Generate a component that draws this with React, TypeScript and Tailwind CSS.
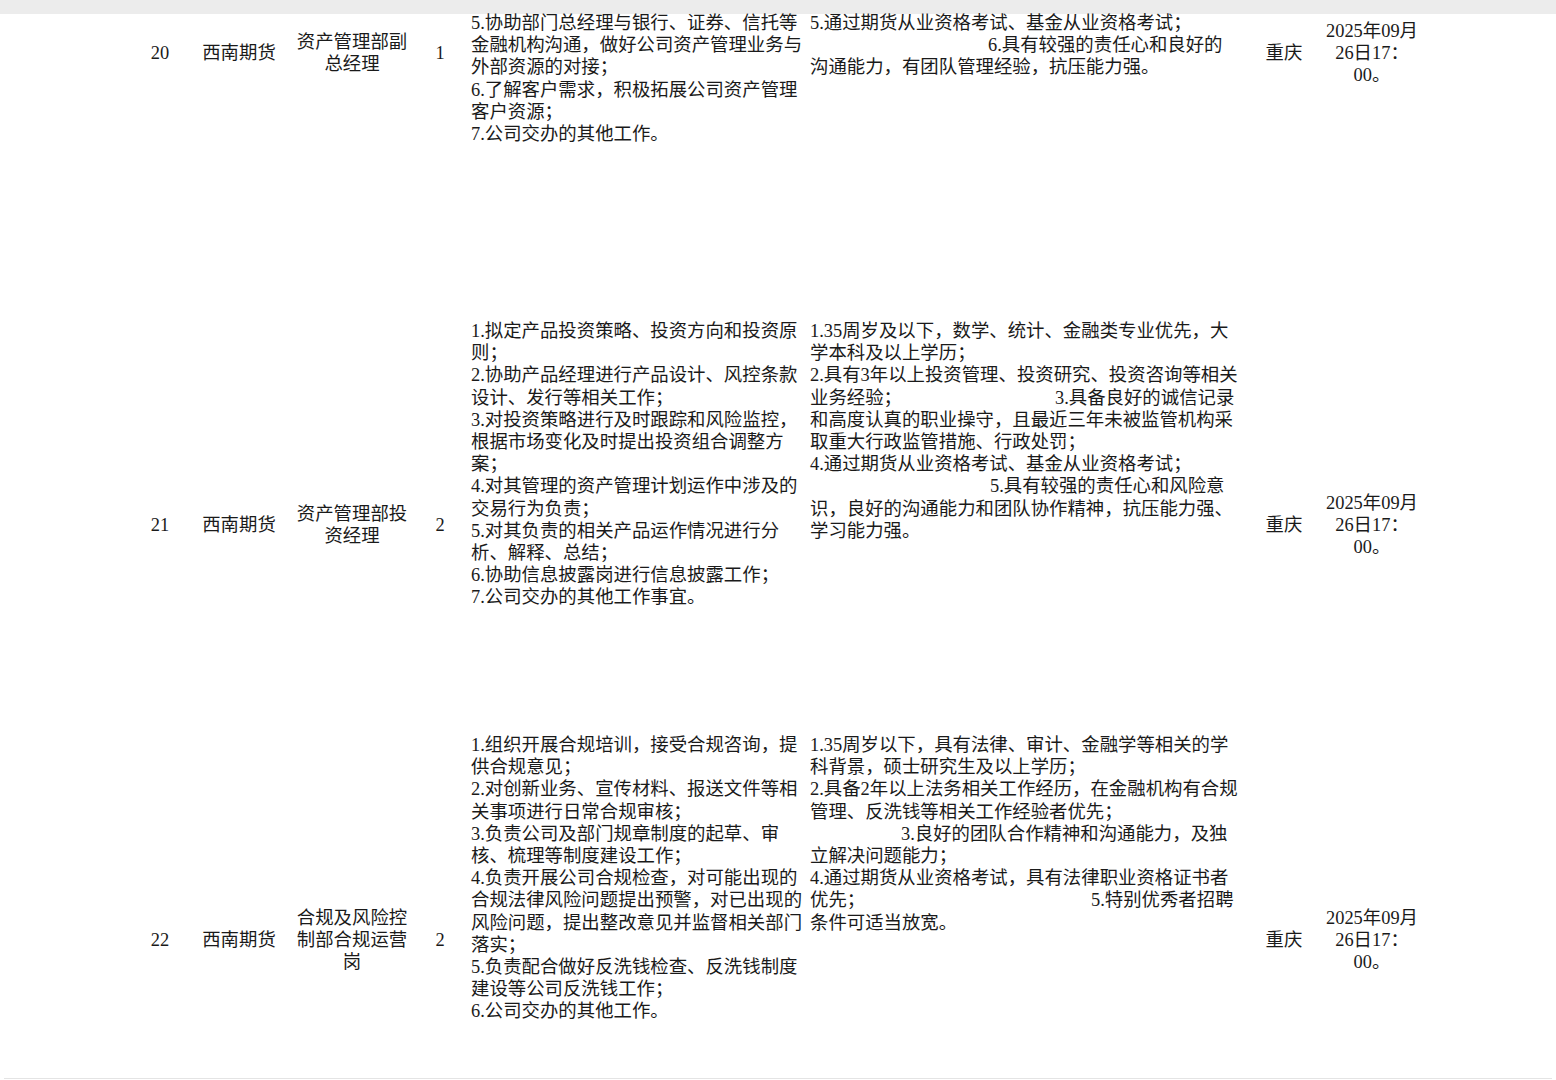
import React from 'react';

type Line = string | { t: string; cls?: string; head?: string; headCls?: string };

interface JobRow {
  no: string;
  company: string;
  title: string[];
  count: string;
  rowCls: string;
  textPad: string;
  duties: Line[];
  reqs: Line[];
  city: string;
  deadline: string[];
}

const rows: JobRow[] = [
  {
    no: '20',
    company: '西南期货',
    title: ['资产管理部副', '总经理'],
    count: '1',
    rowCls: 'h-[530px] -mt-[226px]',
    textPad: 'pt-[224px]',
    duties: [
      '5.协助部门总经理与银行、证券、信托等',
      '金融机构沟通，做好公司资产管理业务与',
      '外部资源的对接；',
      '6.了解客户需求，积极拓展公司资产管理',
      '客户资源；',
      '7.公司交办的其他工作。',
    ],
    reqs: [
      '5.通过期货从业资格考试、基金从业资格考试；',
      { t: '6.具有较强的责任心和良好的', cls: 'pl-[178px]' },
      '沟通能力，有团队管理经验，抗压能力强。',
    ],
    city: '重庆',
    deadline: ['2025年09月', '26日17：', '00。'],
  },
  {
    no: '21',
    company: '西南期货',
    title: ['资产管理部投', '资经理'],
    count: '2',
    rowCls: 'h-[414px]',
    textPad: 'pt-[2px]',
    duties: [
      '1.拟定产品投资策略、投资方向和投资原',
      '则；',
      '2.协助产品经理进行产品设计、风控条款',
      '设计、发行等相关工作；',
      '3.对投资策略进行及时跟踪和风险监控，',
      '根据市场变化及时提出投资组合调整方',
      '案；',
      '4.对其管理的资产管理计划运作中涉及的',
      '交易行为负责；',
      '5.对其负责的相关产品运作情况进行分',
      '析、解释、总结；',
      '6.协助信息披露岗进行信息披露工作；',
      '7.公司交办的其他工作事宜。',
    ],
    reqs: [
      '1.35周岁及以下，数学、统计、金融类专业优先，大',
      '学本科及以上学历；',
      '2.具有3年以上投资管理、投资研究、投资咨询等相关',
      { head: '业务经验；', headCls: 'w-[245px]', t: '3.具备良好的诚信记录' },
      '和高度认真的职业操守，且最近三年未被监管机构采',
      '取重大行政监管措施、行政处罚；',
      '4.通过期货从业资格考试、基金从业资格考试；',
      { t: '5.具有较强的责任心和风险意', cls: 'pl-[180px]' },
      '识，良好的沟通能力和团队协作精神，抗压能力强、',
      '学习能力强。',
    ],
    city: '重庆',
    deadline: ['2025年09月', '26日17：', '00。'],
  },
  {
    no: '22',
    company: '西南期货',
    title: ['合规及风险控', '制部合规运营', '岗'],
    count: '2',
    rowCls: 'h-[416px]',
    textPad: 'pt-[2px]',
    duties: [
      '1.组织开展合规培训，接受合规咨询，提',
      '供合规意见；',
      '2.对创新业务、宣传材料、报送文件等相',
      '关事项进行日常合规审核；',
      '3.负责公司及部门规章制度的起草、审',
      '核、梳理等制度建设工作；',
      '4.负责开展公司合规检查，对可能出现的',
      '合规法律风险问题提出预警，对已出现的',
      '风险问题，提出整改意见并监督相关部门',
      '落实；',
      '5.负责配合做好反洗钱检查、反洗钱制度',
      '建设等公司反洗钱工作；',
      '6.公司交办的其他工作。',
    ],
    reqs: [
      '1.35周岁以下，具有法律、审计、金融学等相关的学',
      '科背景，硕士研究生及以上学历；',
      '2.具备2年以上法务相关工作经历，在金融机构有合规',
      '管理、反洗钱等相关工作经验者优先；',
      { t: '3.良好的团队合作精神和沟通能力，及独', cls: 'pl-[91px]' },
      '立解决问题能力；',
      '4.通过期货从业资格考试，具有法律职业资格证书者',
      { head: '优先；', headCls: 'w-[281px]', t: '5.特别优秀者招聘' },
      '条件可适当放宽。',
    ],
    city: '重庆',
    deadline: ['2025年09月', '26日17：', '00。'],
  },
];

const TextLine: React.FC<{ line: Line }> = ({ line }) => {
  if (typeof line === 'string') {
    return <div className="whitespace-nowrap">{line}</div>;
  }
  if (line.head) {
    return (
      <div className="whitespace-nowrap">
        <span className={`inline-block ${line.headCls ?? ''}`}>{line.head}</span>
        {line.t}
      </div>
    );
  }
  return <div className={`whitespace-nowrap ${line.cls ?? ''}`}>{line.t}</div>;
};

const Row: React.FC<{ row: JobRow }> = ({ row }) => (
  <div
    className={`grid shrink-0 grid-cols-[60px_98px_128px_48px_346px_437px_74px_102px] items-start pl-[130px] ${row.rowCls}`}
  >
    <div className="self-center text-center">{row.no}</div>
    <div className="self-center text-center">{row.company}</div>
    <div className="self-center text-center">
      {row.title.map((t) => (
        <div key={t}>{t}</div>
      ))}
    </div>
    <div className="self-center text-center">{row.count}</div>
    <div className={`pl-[7px] ${row.textPad}`}>
      {row.duties.map((l, i) => (
        <TextLine key={i} line={l} />
      ))}
    </div>
    <div className={row.textPad}>
      {row.reqs.map((l, i) => (
        <TextLine key={i} line={l} />
      ))}
    </div>
    <div className="self-center text-center">{row.city}</div>
    <div className="self-center text-center">
      {row.deadline.map((d) => (
        <div key={d} className="whitespace-nowrap">
          {d}
        </div>
      ))}
    </div>
  </div>
);

export default function App() {
  return (
    <div className="flex h-[1080px] w-[1556px] flex-col overflow-hidden bg-white font-['Liberation_Serif','Noto_Sans_CJK_SC',serif] text-[18.4px] leading-[22.2px] text-[#1a1a1a]">
      {/* viewer toolbar edge */}
      <div className="h-[14px] shrink-0 bg-[#ececec]" />

      {/* table body, scrolled part way into row 20 */}
      <div className="flex min-h-0 flex-1 flex-col">
        {rows.map((row) => (
          <Row key={row.no} row={row} />
        ))}
      </div>

      <div className="shrink-0 px-[4px] pb-px">
        <div className="h-px bg-[#e4e4e4]" />
      </div>
    </div>
  );
}
